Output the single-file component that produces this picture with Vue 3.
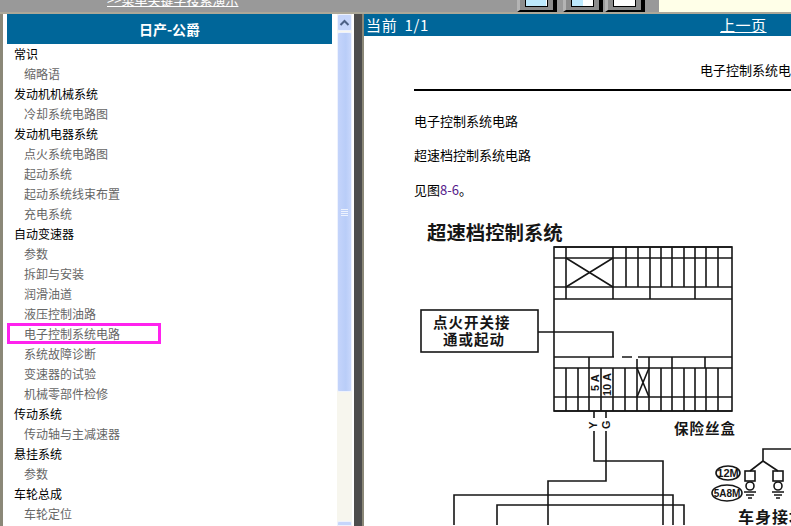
<script setup>
const menu = [
  { title: '常识', items: ['缩略语'] },
  { title: '发动机机械系统', items: ['冷却系统电路图'] },
  { title: '发动机电器系统', items: ['点火系统电路图', '起动系统', '起动系统线束布置', '充电系统'] },
  { title: '自动变速器', items: ['参数', '拆卸与安装', '润滑油道', '液压控制油路', '电子控制系统电路', '系统故障诊断', '变速器的试验', '机械零部件检修'] },
  { title: '传动系统', items: ['传动轴与主减速器'] },
  { title: '悬挂系统', items: ['参数'] },
  { title: '车轮总成', items: ['车轮定位'] }
];

const active = '电子控制系统电路';

const toolButtons = [
  { name: 'a', blue: 20 },
  { name: 'b', blue: 11 },
  { name: 'c', blue: 0 }
];

// fuse box grid, in page coordinates
const rows = [248, 259, 288, 300, 358, 369, 398, 412];
const topCols = [566, 613, 626, 638, 650, 661, 672, 684, 695, 706, 718];
const lowCols = [566, 578, 589, 601, 613, 625, 637, 649, 661, 672, 684, 695, 706, 718];
const topBand = [566, 613, 650, 695];
const lowBand = [589, 637, 649, 672, 705];

const wires = [
  'M538 333H613V358',
  'M594 412V419M606 412V419',
  'M594 432V462H663V526',
  'M606 432V482H548V526',
  'M454 526V496H673V526',
  'M497 526V506H684V526',
  'M791 450H763V462L750 472M763 462L778 472',
  'M566 259L613 288M613 259L566 288',
  'M637 369L649 398M649 369L637 398'
];

const grounds = [750, 778];
</script>

<template>
  <div class="page">
    <div class="topbar">
      <a class="search-link">&gt;&gt;菜单关键字搜索演示</a>
      <div class="tools">
        <div v-for="b in toolButtons" :key="b.name" class="tool">
          <div class="tool-window">
            <div class="tool-blue" :style="{ width: b.blue + 'px' }"></div>
          </div>
        </div>
      </div>
      <div class="cream"></div>
    </div>

    <div class="frames">
      <div class="left-frame">
        <div class="menu">
          <div class="menu-title">日产-公爵</div>
          <template v-for="group in menu" :key="group.title">
            <div class="group">{{ group.title }}</div>
            <div
              v-for="item in group.items"
              :key="group.title + item"
              class="item"
              :class="{ active: item === active }"
            >{{ item }}</div>
          </template>
        </div>
        <div class="scrollbar">
          <div class="scroll-btn">
            <svg width="11" height="8" viewBox="0 0 11 8">
              <path d="M1.5 6L5.5 2L9.5 6" fill="none" stroke="#4d6185" stroke-width="2" />
            </svg>
          </div>
          <div class="scroll-thumb">
            <div class="grip"><i></i><i></i><i></i><i></i></div>
          </div>
          <div class="scroll-track"></div>
          <div class="scroll-btn low"></div>
        </div>
      </div>

      <div class="splitter"></div>

      <div class="right-frame">
        <div class="doc-bar">
          <span class="page-no">当前 1/1</span>
          <a class="prev">上一页</a>
        </div>
        <div class="doc">
          <div class="doc-head">电子控制系统电路</div>
          <div class="doc-rule"></div>
          <p class="para first">电子控制系统电路</p>
          <p class="para">超速档控制系统电路</p>
          <p class="para">见图<span class="fig">8-6</span>。</p>
          <svg class="diagram" width="377" height="311" viewBox="414 215 377 311">
            <g fill="none" stroke="#161616" stroke-width="1.6">
              <rect x="554" y="248" width="178" height="164" />
              <line v-for="y in rows" :key="'r' + y" x1="554" x2="732" :y1="y" :y2="y" />
              <line v-for="x in topCols" :key="'t' + x" :x1="x" :x2="x" y1="248" y2="288" />
              <line v-for="x in topBand" :key="'b' + x" :x1="x" :x2="x" y1="288" y2="300" />
              <line v-for="x in lowBand" :key="'l' + x" :x1="x" :x2="x" y1="358" y2="369" />
              <line v-for="x in lowCols" :key="'c' + x" :x1="x" :x2="x" y1="369" y2="412" />
              <rect x="421" y="311" width="117" height="42" />
              <path v-for="d in wires" :key="d" :d="d" />
              <g v-for="x in grounds" :key="x">
                <rect :x="x - 5" y="472" width="10" height="10" />
                <circle :cx="x" cy="487" r="4" />
                <path :d="`M${x - 6} 493H${x + 6}M${x - 4} 496H${x + 4}M${x - 2} 499H${x + 2}`" />
              </g>
              <ellipse cx="728" cy="474" rx="12" ry="7" />
              <ellipse cx="727" cy="494" rx="15" ry="8" />
            </g>
            <rect x="614" y="357" width="8" height="3" fill="#fff" />
            <rect x="632" y="357" width="6" height="3" fill="#fff" />
            <g class="dia-text">
              <text x="427" y="241" class="dia-title">超速档控制系统</text>
              <text x="433" y="329" class="dia-label">点火开关接</text>
              <text x="443" y="346" class="dia-label">通或起动</text>
              <text x="674" y="435" class="dia-label">保险丝盒</text>
              <text x="738" y="524" class="dia-label wide">车身接地</text>
              <text x="728" y="478" class="dia-small" text-anchor="middle">12M</text>
              <text x="727" y="498" class="dia-small tight" text-anchor="middle">5A8M</text>
              <text transform="translate(599 392) rotate(-90)" class="dia-fuse">5 A</text>
              <text transform="translate(611 397) rotate(-90)" class="dia-fuse">10 A</text>
              <text transform="translate(597 430) rotate(-90)" class="dia-fuse">Y</text>
              <text transform="translate(610 430) rotate(-90)" class="dia-fuse">G</text>
            </g>
          </svg>
        </div>
      </div>
    </div>
  </div>
</template>

<style scoped>
.page {
  width: 791px;
  height: 526px;
  display: flex;
  flex-direction: column;
  overflow: hidden;
  font-family: "Noto Sans CJK SC", "Liberation Sans", sans-serif;
  background: #fff;
}

.topbar {
  height: 12px;
  flex: none;
  display: flex;
  background: #999;
  overflow: hidden;
}

.search-link {
  margin: -9px 0 0 107px;
  width: 410px;
  height: 17px;
  font-size: 13px;
  line-height: 17px;
  color: #fff;
  white-space: nowrap;
  text-decoration: underline;
}

.tools {
  width: 142px;
  flex: none;
  display: flex;
}

.tool {
  width: 40px;
  height: 12px;
  flex: none;
  box-sizing: border-box;
  background: #8c8c8c;
  border-left: 3px solid #b4b4b4;
  border-right: 4px solid #000;
  border-bottom: 2px solid #000;
  padding: 0 5px 3px 5px;
}

.tool:nth-child(2) {
  margin-left: 6px;
}

.tool:nth-child(3) {
  margin-left: 2px;
}

.tool-window {
  height: 100%;
  box-sizing: border-box;
  border: 1px solid #000;
  border-top: 0;
  background: #fff;
}

.tool-blue {
  height: 100%;
  background: #bde9fd;
}

.cream {
  flex: 1;
  background: #ffffe8;
}

.frames {
  flex: 1;
  min-height: 0;
  display: flex;
  border-top: 2px solid #aca899;
}

.left-frame {
  width: 354px;
  flex: none;
  box-sizing: border-box;
  display: flex;
  border-left: 3px solid #8b8878;
  background: #fff;
  padding-left: 4px;
}

.menu {
  width: 325px;
  flex: none;
  font-size: 12px;
  line-height: 20px;
  overflow: hidden;
}

.menu-title {
  height: 30px;
  background: #006699;
  color: #fff;
  font-size: 14px;
  font-weight: 700;
  line-height: 30px;
  text-align: center;
}

.group {
  padding-left: 7px;
  color: #000;
}

.item {
  position: relative;
  padding-left: 17px;
  color: #666;
}

.item.active::after {
  content: '';
  position: absolute;
  left: 0;
  top: -1px;
  width: 154px;
  height: 21px;
  box-sizing: border-box;
  border: 3px solid #ff22ee;
}

.scrollbar {
  width: 15px;
  flex: none;
  margin-left: 5px;
  display: flex;
  flex-direction: column;
  background: #f7f6ee;
}

.scroll-btn {
  height: 17px;
  flex: none;
  box-sizing: border-box;
  display: flex;
  align-items: center;
  justify-content: center;
  background: #c6d6fb;
  border: 1px solid #eef2fd;
  border-radius: 2px;
}

.scroll-btn.low {
  margin-top: auto;
  height: 5px;
  border-radius: 2px 2px 0 0;
}

.scroll-thumb {
  height: 360px;
  flex: none;
  margin-top: 1px;
  box-sizing: border-box;
  background: linear-gradient(90deg, #c4d4fb, #b9cdf8 60%, #c8d7fb);
  border: 1px solid #eef2fd;
  border-radius: 2px;
  display: flex;
  align-items: center;
  justify-content: center;
}

.grip {
  width: 7px;
  display: flex;
  flex-direction: column;
  gap: 1px;
}

.grip i {
  display: block;
  height: 1px;
  background: #eef3fe;
}

.scroll-track {
  flex: 1;
  min-height: 0;
}

.splitter {
  width: 8px;
  flex: none;
  background: #4d4d4d;
  border-right: 2px solid #8b8878;
}

.right-frame {
  flex: 1;
  min-width: 0;
  overflow: hidden;
  background: #fff;
}

.doc-bar {
  height: 22px;
  display: flex;
  align-items: center;
  background: #006699;
  color: #fff;
  font-size: 15px;
  line-height: 22px;
  white-space: nowrap;
}

.page-no {
  padding-left: 2px;
  letter-spacing: 0.7px;
  word-spacing: 3px;
}

.prev {
  margin-left: 291px;
  text-decoration: underline;
  letter-spacing: 0.5px;
}

.doc {
  padding-left: 50px;
  width: 700px;
}

.doc-head {
  padding: 24px 0 0 286px;
  font-size: 13px;
  line-height: 20px;
  color: #000;
  white-space: nowrap;
}

.doc-rule {
  height: 2px;
  margin-top: 9px;
  background: #000;
}

.para {
  margin: 14px 0 0;
  font-size: 13px;
  line-height: 20px;
  color: #000;
}

.para.first {
  margin-top: 20px;
}

.para:nth-of-type(3) {
  margin-top: 15px;
}

.fig {
  color: #551a8b;
}

.diagram {
  display: block;
  margin-top: 14px;
}

.dia-text {
  fill: #161616;
}

.dia-title {
  font-size: 19.4px;
  font-weight: 700;
}

.dia-label {
  font-size: 14.5px;
  font-weight: 700;
  letter-spacing: 1px;
}

.dia-label.wide {
  font-size: 16px;
}

.dia-small {
  font-size: 11px;
  font-weight: 700;
  font-family: "Liberation Sans", sans-serif;
}

.dia-small.tight {
  font-size: 10px;
}

.dia-fuse {
  font-size: 11px;
  font-weight: 700;
  font-family: "Liberation Sans", sans-serif;
}
</style>

<style>
html,
body {
  margin: 0;
  overflow: hidden;
}
</style>
